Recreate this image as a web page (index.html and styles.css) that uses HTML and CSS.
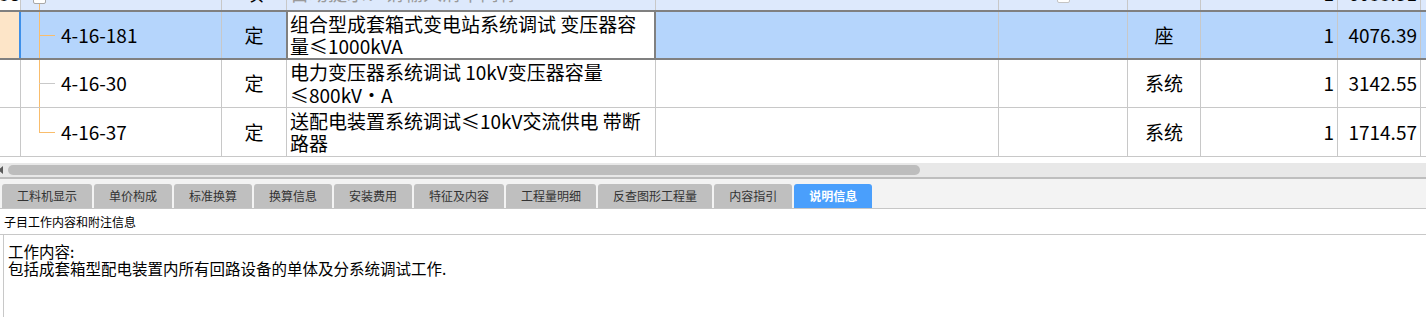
FILE: index.html
```html
<!DOCTYPE html>
<html lang="zh-CN">
<head>
    <meta charset="UTF-8">
    <title>分部分项工程</title>
    <link rel="stylesheet" href="styles.css">
</head>
<body>
    <!-- 清单/定额表格（已滚动，首行只露出底部） -->
    <div class="grid">
        <div class="grid-body">
            <div class="row top">
                <div class="cell idx">38</div>
                <div class="cell code"><span class="root"><span class="box"></span><span class="stem"></span></span></div>
                <div class="cell type">项</div>
                <div class="cell name hint">自动提示：请输入清单简称</div>
                <div class="cell"></div>
                <div class="cell check"><span class="checkbox"></span></div>
                <div class="cell unit"></div>
                <div class="cell num">1</div>
                <div class="cell num">6033.51</div>
                <div class="cell"></div>
            </div>
            <div class="row sel">
                <div class="cell idx"></div>
                <div class="cell code"><span class="tree"></span>4-16-181</div>
                <div class="cell type">定</div>
                <div class="cell name">组合型成套箱式变电站系统调试 变压器容<br>量≤1000kVA</div>
                <div class="cell"></div>
                <div class="cell"></div>
                <div class="cell unit">座</div>
                <div class="cell num">1</div>
                <div class="cell num">4076.39</div>
                <div class="cell"></div>
            </div>
            <div class="row">
                <div class="cell idx"></div>
                <div class="cell code"><span class="tree grey"></span>4-16-30</div>
                <div class="cell type">定</div>
                <div class="cell name">电力变压器系统调试 10kV变压器容量<br>≤800kV・A</div>
                <div class="cell"></div>
                <div class="cell"></div>
                <div class="cell unit">系统</div>
                <div class="cell num">1</div>
                <div class="cell num">3142.55</div>
                <div class="cell"></div>
            </div>
            <div class="row last">
                <div class="cell idx"></div>
                <div class="cell code"><span class="tree end"></span>4-16-37</div>
                <div class="cell type">定</div>
                <div class="cell name">送配电装置系统调试≤10kV交流供电 带断<br>路器</div>
                <div class="cell"></div>
                <div class="cell"></div>
                <div class="cell unit">系统</div>
                <div class="cell num">1</div>
                <div class="cell num">1714.57</div>
                <div class="cell"></div>
            </div>
        </div>
    </div>

    <div class="hscroll">
        <span class="arrow"></span>
        <span class="thumb"></span>
    </div>

    <!-- 下方属性页签 -->
    <div class="tabs">
        <div class="tab">工料机显示</div>
        <div class="tab">单价构成</div>
        <div class="tab">标准换算</div>
        <div class="tab">换算信息</div>
        <div class="tab">安装费用</div>
        <div class="tab">特征及内容</div>
        <div class="tab">工程量明细</div>
        <div class="tab">反查图形工程量</div>
        <div class="tab">内容指引</div>
        <div class="tab active">说明信息</div>
    </div>

    <div class="info-title">子目工作内容和附注信息</div>
    <div class="info-text">
        工作内容:<br>
        包括成套箱型配电装置内所有回路设备的单体及分系统调试工作.
    </div>
</body>
</html>
```

FILE: styles.css
```css
body {
    margin: 0;
    width: 1426px;
    height: 317px;
    overflow: hidden;
    font-family: "Noto Sans CJK SC", sans-serif;
    background-color: #fff;
    color: #000;
}

/* 表格 */
.grid {
    height: 157px;
    overflow: hidden;
}
.grid-body {
    margin-top: -20px;
}
.row {
    display: grid;
    grid-template-columns: 21px 201px 65px 369px 343px 129px 73px 137px 83px 1fr;
    height: 48px;
    box-sizing: border-box;
    border-bottom: 1px solid #c8c8c8;
    font-size: 19px;
    line-height: 22.5px;
}
.row.last {
    height: 49px;
}
.cell {
    display: flex;
    align-items: center;
    box-sizing: border-box;
    padding: 0 3px;
    border-right: 1px solid #c8c8c8;
    white-space: nowrap;
    overflow: hidden;
}
.cell.type, .cell.unit, .cell.check {
    justify-content: center;
}
.cell.num {
    justify-content: flex-end;
}
.cell.idx {
    padding: 0;
    justify-content: flex-end;
}
.cell.code {
    padding: 0;
}

/* 树形连线 */
.tree {
    align-self: stretch;
    width: 16px;
    margin-left: 18px;
    margin-right: 6px;
    display: flex;
    align-items: center;
    background: linear-gradient(#f9bd6c, #f9bd6c) no-repeat 0 0 / 1px 100%;
}
.tree::before {
    content: "";
    width: 16px;
    border-top: 1px solid #f9bd6c;
}
.tree.grey::before {
    border-top-color: #c9c9c9;
}
.tree.end {
    background-size: 1px 50%;
}
.root {
    align-self: stretch;
    display: flex;
    flex-direction: column;
    align-items: center;
    width: 13px;
    margin-left: 12px;
    padding-top: 11px;
}
.box {
    width: 11px;
    height: 11px;
    border: 1px solid #a8a8a8;
    border-radius: 2px;
    background-color: #fff;
}
.stem {
    flex: 1;
    width: 1px;
    background-color: #f9bd6c;
}
.checkbox {
    width: 11px;
    height: 11px;
    margin-bottom: 7px;
    border: 1px solid #c4c4c4;
    border-radius: 2px;
    background-color: #fff;
}

/* 首行（被滚动遮住） */
.row.top {
    height: 30px;
    border-bottom: none;
}
.row.top .cell {
    align-items: flex-end;
    padding-bottom: 6px;
    background-color: #dde9fc;
}
.row.top .cell.idx {
    background-color: #fff;
}
.row.top .cell.code {
    padding-bottom: 0;
    align-items: stretch;
}
.row.top .cell.check {
    padding-bottom: 0;
    align-items: flex-end;
}
.hint {
    color: #9a9a9a;
}

/* 当前选中行 */
.row.sel {
    height: 50px;
    border-top: 2px solid #808080;
    border-bottom: 2px solid #808080;
}
.row.sel .cell {
    background-color: #b5d5fc;
}
.row.sel .cell.idx {
    background-color: #fde5c8;
    border-right: 2px solid #3d8fe9;
}
.row.sel .cell.type {
    border-right-color: #808080;
}
.row.sel .cell.name {
    background-color: #fff;
    box-shadow: inset 1px 0 #808080;
    border-right: 2px solid #808080;
}

/* 横向滚动条 */
.hscroll {
    display: flex;
    align-items: center;
    height: 14px;
    margin-top: 6px;
    background-color: #e8e8e8;
    overflow: hidden;
}
.hscroll .arrow {
    width: 0;
    height: 0;
    margin-left: -2px;
    border-right: 5px solid #5a5a5a;
    border-top: 4px solid transparent;
    border-bottom: 4px solid transparent;
}
.hscroll .thumb {
    width: 912px;
    height: 10px;
    margin-left: 5px;
    border-radius: 5px;
    background-color: #bdbdbd;
}

/* 页签 */
.tabs {
    display: flex;
    gap: 2px;
    padding: 5px 0 0 2px;
    background-color: #f3f3f3;
    border-top: 2px solid #bebebe;
    border-bottom: 1px solid #c6c6c6;
}
.tab {
    height: 24px;
    line-height: 24px;
    padding: 0 15px;
    font-size: 12px;
    color: #333;
    background-color: #bfbfbf;
    border-radius: 3px 3px 0 0;
}
.tab.active {
    background-color: #4a9ffc;
    color: #fff;
    font-weight: bold;
}

/* 说明信息 */
.info-title {
    height: 25px;
    line-height: 25px;
    padding-left: 4px;
    font-size: 12px;
    border-bottom: 1px solid #c8c8c8;
}
.info-text {
    height: 74px;
    margin-left: 3px;
    padding: 8px 4px 0;
    border-left: 1px solid #c8c8c8;
    font-size: 15.5px;
    line-height: 17px;
}
```
